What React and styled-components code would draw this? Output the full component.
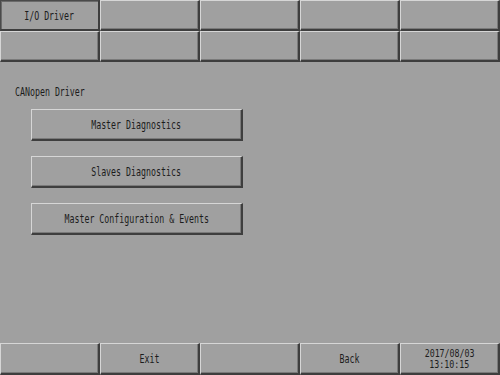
import React from "react";
import styled, { createGlobalStyle } from "styled-components";

const Global = createGlobalStyle`
  html, body { margin: 0; padding: 0; background: #a0a0a0; }
  * { box-sizing: border-box; }
`;

const Screen = styled.div`
  width: 500px;
  height: 375px;
  display: flex;
  flex-direction: column;
  background: #a0a0a0;
  font-family: "DejaVu Sans Mono", "Liberation Mono", monospace;
  font-size: 12px;
  color: #1c1c1c;
  overflow: hidden;
`;

const TabGrid = styled.div`
  display: grid;
  grid-template-columns: repeat(5, 100px);
  grid-auto-rows: 31px;
`;

const FooterGrid = styled.div`
  display: grid;
  grid-template-columns: repeat(5, 100px);
  grid-auto-rows: 32px;
`;

const Cell = styled.div`
  display: flex;
  align-items: center;
  justify-content: center;
  flex-direction: column;
  background: #a0a0a0;
  border-top: 1px solid ${(p) => (p.$pressed ? "#4a4a4a" : "#d6d6d6")};
  border-left: 1px solid ${(p) => (p.$pressed ? "#4a4a4a" : "#d6d6d6")};
  border-right: 2px solid #3e3e3e;
  border-bottom: 2px solid #3e3e3e;
  box-shadow: ${(p) =>
    p.$pressed
      ? "inset 1px 1px 0 #6a6a6a"
      : "inset -1px -1px 0 #7a7a7a"};
  line-height: 11px;
`;

const Txt = styled.span`
  display: inline-block;
  white-space: nowrap;
  line-height: 12px;
  padding-top: 1px;
  transform: scaleX(0.69);
  transform-origin: ${(p) => (p.$left ? "left center" : "center")};
`;

const DateLine = styled.span`
  display: inline-block;
  white-space: nowrap;
  font-size: 10.5px;
  line-height: 11px;
  height: 11px;
  transform: scaleX(0.79);
  transform-origin: center;
`;

const Main = styled.div`
  flex: 1;
  display: flex;
  flex-direction: column;
  padding: 23px 0 0 15px;
`;

const Label = styled.div`
  height: 12px;
  margin-bottom: 12px;
  display: flex;
  align-items: center;
`;

const ButtonList = styled.div`
  display: flex;
  flex-direction: column;
  gap: 15px;
  padding-left: 16px;
`;

const Btn = styled.div`
  width: 212px;
  height: 32px;
  display: flex;
  align-items: center;
  justify-content: center;
  background: #a0a0a0;
  border-top: 1px solid #d6d6d6;
  border-left: 1px solid #d6d6d6;
  border-right: 2px solid #3e3e3e;
  border-bottom: 2px solid #3e3e3e;
  box-shadow: inset -1px -1px 0 #7a7a7a;
`;

const tabs = ["I/O Driver", "", "", "", "", "", "", "", "", ""];
const buttons = [
  "Master Diagnostics",
  "Slaves Diagnostics",
  "Master Configuration & Events",
];

export default function App() {
  return (
    <Screen>
      <Global />
      <TabGrid>
        {tabs.map((t, i) => (
          <Cell key={i} $pressed={i === 0}>
            {t && <Txt>{t}</Txt>}
          </Cell>
        ))}
      </TabGrid>
      <Main>
        <Label>
          <Txt $left>CANopen Driver</Txt>
        </Label>
        <ButtonList>
          {buttons.map((b) => (
            <Btn key={b}>
              <Txt>{b}</Txt>
            </Btn>
          ))}
        </ButtonList>
      </Main>
      <FooterGrid>
        <Cell />
        <Cell>
          <Txt>Exit</Txt>
        </Cell>
        <Cell />
        <Cell>
          <Txt>Back</Txt>
        </Cell>
        <Cell>
          <DateLine>2017/08/03</DateLine>
          <DateLine>13:10:15</DateLine>
        </Cell>
      </FooterGrid>
    </Screen>
  );
}
